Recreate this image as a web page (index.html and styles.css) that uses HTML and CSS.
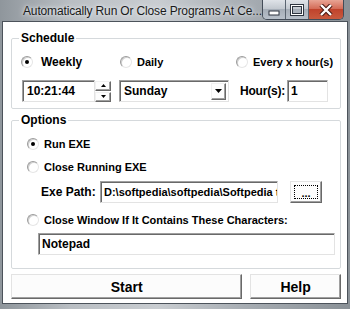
FILE: index.html
```html
<!DOCTYPE html>
<html>
<head>
    <title>Automatically Run Or Close Programs</title>
    <link rel="stylesheet" href="styles.css">
</head>
<body>
    <div class="window">
        <div class="titlebar">
            <span class="title">Automatically Run Or Close Programs At Ce...</span>
            <div class="caption-btns">
                <div class="cbtn min">
                    <svg width="12" height="6" viewBox="0 0 12 6"><rect x="1" y="1" width="10" height="4" fill="#fff" stroke="#2e3540" stroke-width="1"/></svg>
                </div>
                <div class="cbtn max">
                    <svg width="14" height="12" viewBox="0 0 14 12"><rect x="1.5" y="1.5" width="11" height="9" fill="none" stroke="#2e3540" stroke-width="3"/><rect x="1.5" y="1.5" width="11" height="9" fill="none" stroke="#fff" stroke-width="1"/></svg>
                </div>
                <div class="cbtn close">
                    <svg width="14" height="12" viewBox="0 0 14 12"><path d="M2 1 L12 11 M12 1 L2 11" stroke="#4a1a14" stroke-width="4.4"/><path d="M2 1 L12 11 M12 1 L2 11" stroke="#fff" stroke-width="2.4"/></svg>
                </div>
            </div>
        </div>

        <div class="client">
            <fieldset class="group schedule">
                <legend>Schedule</legend>
                <div class="row radios">
                    <div class="opt weekly"><span class="radio on"></span><span class="txt">Weekly</span></div>
                    <div class="opt daily"><span class="radio"></span><span class="txt">Daily</span></div>
                    <div class="opt"><span class="radio"></span><span class="txt">Every x hour(s)</span></div>
                </div>
                <div class="row fields">
                    <div class="edit time">10:21:44</div>
                    <div class="spin">
                        <div class="spin-btn"><svg width="5" height="3" viewBox="0 0 5 3"><path d="M2.5 0 L5 3 L0 3 Z" fill="#000"/></svg></div>
                        <div class="spin-btn"><svg width="5" height="3" viewBox="0 0 5 3"><path d="M0 0 L5 0 L2.5 3 Z" fill="#000"/></svg></div>
                    </div>
                    <div class="edit combo">
                        <span class="combo-text">Sunday</span>
                        <div class="drop-btn"><svg width="7" height="4" viewBox="0 0 7 4"><path d="M0 0 L7 0 L3.5 4 Z" fill="#000"/></svg></div>
                    </div>
                    <span class="lbl hours-lbl">Hour(s):</span>
                    <div class="edit hours">1</div>
                </div>
            </fieldset>

            <fieldset class="group options">
                <legend>Options</legend>
                <div class="row opt-row first"><span class="radio on"></span><span class="txt">Run EXE</span></div>
                <div class="row opt-row"><span class="radio"></span><span class="txt">Close Running EXE</span></div>
                <div class="row path-row">
                    <span class="lbl path-lbl">Exe Path:</span>
                    <div class="edit path">D:\softpedia\softpedia\Softpedia t</div>
                    <div class="btn browse"><span class="focus">...</span></div>
                </div>
                <div class="row opt-row"><span class="radio"></span><span class="txt">Close Window If It Contains These Characters:</span></div>
                <div class="row chars-row">
                    <div class="edit chars">Notepad</div>
                </div>
            </fieldset>

            <div class="actions">
                <div class="btn big start">Start</div>
                <div class="btn big help">Help</div>
            </div>
        </div>
    </div>
</body>
</html>
```

FILE: styles.css
```css
body {
    margin: 0;
    background-color: #a8aeb4;
}
.window {
    width: 350px;
    height: 309px;
    background: linear-gradient(to right, #8f969c, #b9bec3 20%, #c9cdd1 45%, #a7adb3 70%, #8a9197);
    display: flex;
    flex-direction: column;
    overflow: hidden;
}
.titlebar {
    height: 21px;
    display: flex;
    align-items: flex-start;
    flex-shrink: 0;
}
.title {
    font-family: "Liberation Sans", Arial, sans-serif;
    font-size: 12px;
    letter-spacing: -0.15px;
    color: #1a1a1a;
    margin: 4px 0 0 23px;
    white-space: nowrap;
    text-shadow: 0 0 6px #e8ecf0, 0 0 3px #e8ecf0;
}
.caption-btns {
    display: flex;
    margin-left: auto;
    margin-right: 6px;
    height: 19px;
    border: 1px solid #434c58;
    border-top: none;
    border-radius: 0 0 5px 5px;
    overflow: hidden;
}
.cbtn {
    display: flex;
    align-items: center;
    justify-content: center;
    height: 19px;
}
.cbtn.min, .cbtn.max {
    width: 25px;
    background: linear-gradient(#dfe3e8, #c3c9d0 45%, #a6aeb8 50%, #b8c0ca);
    border-right: 1px solid #5a6470;
}
.cbtn.min svg {
    margin-top: 6px;
}
.cbtn.close {
    width: 39px;
    background: linear-gradient(#e8a494, #d46c58 45%, #c0432c 50%, #c85a3e);
}
.client {
    flex: 1;
    margin: 0 2px 5px 2px;
    border: 1px solid #4c535b;
    background-color: #fff;
    padding: 10px 6px 0 8px;
    font-family: "Liberation Sans", Arial, sans-serif;
    font-size: 11px;
    font-weight: bold;
    color: #000;
}
.group {
    margin: 0;
    padding: 0;
    width: 328px;
    border: 1px solid #d5d9dc;
    border-radius: 2px;
}
.group legend {
    font-size: 12px;
    line-height: 13px;
    padding: 0 2px;
    margin-left: 7px;
}
.row {
    display: flex;
    align-items: center;
}
.schedule {
    padding: 10px 0 6px 0;
}
.radios {
    height: 13px;
    padding-left: 9px;
}
.opt {
    display: flex;
    align-items: center;
}
.opt.weekly {
    width: 99px;
}
.opt.weekly .txt {
    margin-left: 8px;
    font-size: 12px;
}
.opt.daily {
    width: 116px;
}
.radio {
    width: 10px;
    height: 10px;
    border-radius: 50%;
    border: 1px solid;
    border-color: #9c9c9c #e6e6e6 #e6e6e6 #9c9c9c;
    box-shadow: inset 1px 1px 0 #d0d0d0;
    background-color: #fff;
    display: flex;
    align-items: center;
    justify-content: center;
    flex-shrink: 0;
}
.radio.on::after {
    content: "";
    width: 4px;
    height: 4px;
    border-radius: 50%;
    background-color: #000;
}
.txt {
    margin-left: 5px;
    white-space: nowrap;
}
.fields {
    height: 22px;
    margin-top: 12px;
    padding-left: 10px;
}
.edit {
    height: 22px;
    box-sizing: border-box;
    border: 1px solid;
    border-color: #a0a0a0 #e3e3e3 #e3e3e3 #a0a0a0;
    box-shadow: inset 1px 1px 0 #696969;
    padding: 0 0 0 3px;
    display: flex;
    align-items: center;
    white-space: nowrap;
    overflow: hidden;
    background-color: #fff;
}
.time {
    width: 73px;
    padding-left: 4px;
    font-size: 12px;
}
.spin {
    width: 16px;
    height: 21px;
    display: flex;
    flex-direction: column;
    gap: 1px;
}
.spin-btn, .drop-btn {
    flex: 1;
    box-sizing: border-box;
    border: 1px solid;
    border-color: #f0f0f0 #696969 #696969 #f0f0f0;
    box-shadow: inset -1px -1px 0 #a0a0a0;
    background-color: #fdfdfd;
    display: flex;
    align-items: center;
    justify-content: center;
}
.combo {
    width: 110px;
    margin-left: 8px;
    padding-right: 2px;
    font-size: 12px;
}
.combo-text {
    flex: 1;
    padding-left: 1px;
}
.drop-btn {
    flex: 0 0 15px;
    height: 17px;
}
.hours-lbl {
    width: 47px;
    margin-left: 11px;
    font-size: 12px;
    letter-spacing: -0.2px;
}
.hours {
    width: 41px;
    font-size: 12px;
}
.options {
    margin-top: 5px;
    padding: 0 0 13px 0;
}
.opt-row {
    height: 13px;
    padding-left: 15px;
    margin-top: 10px;
}
.path-row {
    height: 22px;
    margin-top: 8px;
    padding-left: 29px;
}
.path-lbl {
    width: 59px;
    font-size: 12px;
}
.path {
    width: 178px;
}
.btn {
    box-sizing: border-box;
    border: 1px solid;
    border-color: #e3e3e3 #696969 #696969 #e3e3e3;
    box-shadow: inset -1px -1px 0 #a0a0a0;
    background-color: #fcfcfc;
    display: flex;
    align-items: center;
    justify-content: center;
}
.browse {
    width: 32px;
    height: 22px;
    margin-left: 12px;
}
.browse .focus {
    width: 24px;
    height: 14px;
    border: 1px dotted #000;
    box-sizing: border-box;
    display: flex;
    align-items: flex-end;
    justify-content: center;
    line-height: 10px;
}
.chars-row {
    margin-top: 7px;
    padding-left: 26px;
}
.chars {
    width: 297px;
    font-size: 12px;
}
.actions {
    display: flex;
    margin-top: 5px;
    gap: 8px;
}
.btn.big {
    height: 25px;
    font-size: 14px;
}
.start {
    width: 232px;
}
.help {
    width: 91px;
}
```
